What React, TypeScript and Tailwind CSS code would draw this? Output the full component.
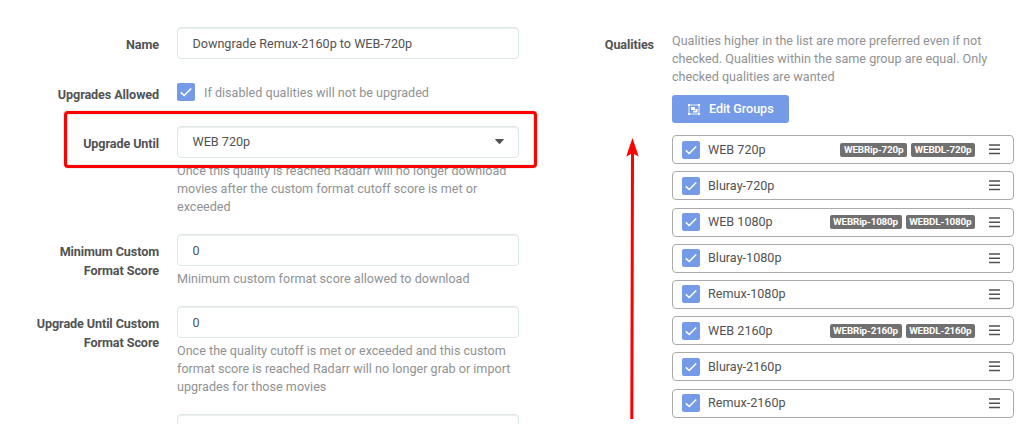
import type { ReactNode } from "react";

type Quality = { name: string; tags?: string[] };

const qualities: Quality[] = [
  { name: "WEB 720p", tags: ["WEBRip-720p", "WEBDL-720p"] },
  { name: "Bluray-720p" },
  { name: "WEB 1080p", tags: ["WEBRip-1080p", "WEBDL-1080p"] },
  { name: "Bluray-1080p" },
  { name: "Remux-1080p" },
  { name: "WEB 2160p", tags: ["WEBRip-2160p", "WEBDL-2160p"] },
  { name: "Bluray-2160p" },
  { name: "Remux-2160p" },
];

function Checkbox() {
  return (
    <span className="flex h-[18px] w-[18px] shrink-0 items-center justify-center rounded-[2px] bg-[#749ae8]">
      <svg viewBox="0 0 12 12" className="h-3 w-3" fill="none" stroke="#fff" strokeWidth="1.6">
        <path d="M.8 6.400L4.200 9.500L11.200 2.500" />
      </svg>
    </span>
  );
}

function Field({ label, children }: { label: string; children: ReactNode }) {
  return (
    <div className="mb-[18px] flex">
      <label className="mr-[18px] w-[139px] shrink-0 pt-2 text-right leading-[19px] font-bold tracking-[-0.09px]">
        {label}
      </label>
      <div className="w-[342px] shrink-0">{children}</div>
    </div>
  );
}

function Input({ value }: { value: string }) {
  return (
    <div className="flex h-[31.5px] items-center rounded-[4px] border border-[#dde6e9] px-[14.5px] pt-[1.5px] shadow-[inset_0_1px_1px_rgba(0,0,0,0.075)]">
      {value}
    </div>
  );
}

function Help({ children }: { children: ReactNode }) {
  return <div className="mt-[4.5px] leading-[18px] text-[#909293]">{children}</div>;
}

function QualityRow({ name, tags }: Quality) {
  return (
    <div className="mb-[7.2px] flex h-[29px] items-center rounded-[4px] border border-[#aaa] pl-[9px]">
      <Checkbox />
      <span className="ml-2 grow">{name}</span>
      {tags && (
        <span className="flex gap-1">
          {tags.map((tag) => (
            <span
              key={tag}
              className="flex h-[14px] items-center rounded-[2px] bg-[#707070] px-[3.6px] text-[9.9px] leading-none font-bold tracking-[-0.19px] text-white"
            >
              {tag}
            </span>
          ))}
        </span>
      )}
      <svg className="mr-[13px] ml-[14px] h-[11px] w-[11px]" viewBox="0 0 11 11" fill="#515253">
        <path d="M0 .2h11v1.500H0zM0 4.500h11V6H0zM0 8.800h11v1.500H0z" />
      </svg>
    </div>
  );
}

export default function App() {
  return (
    <main className="relative flex h-[424px] w-[1022px] overflow-hidden bg-white font-['Roboto',sans-serif] text-[12.6px] leading-[18px] text-[#515253]">
      <section className="ml-5 w-[499px] shrink-0 pt-[27px]">
        <Field label="Name">
          <Input value="Downgrade Remux-2160p to WEB-720p" />
        </Field>
        <Field label="Upgrades Allowed">
          <div className="flex h-[31.5px] items-center gap-[9px] text-[#909293]">
            <Checkbox />
            <span className="pt-px">If disabled qualities will not be upgraded</span>
          </div>
        </Field>
        <Field label="Upgrade Until">
          <div className="flex h-[31.5px] items-center justify-between rounded-[4px] border border-[#dde6e9] px-[14.5px] shadow-[inset_0_1px_1px_rgba(0,0,0,0.075)]">
            WEB 720p
            <svg className="h-[5px] w-[9px]" viewBox="0 0 9 5" fill="#515253">
              <path d="M.6 0h7.800q.8.1.300.800L5 4.700q-.5.400-1 0L.3.800Q-.2.100.6 0z" />
            </svg>
          </div>
          <Help>
            Once this quality is reached Radarr will no longer download movies after the custom format cutoff score is
            met or exceeded
          </Help>
        </Field>
        <Field label="Minimum Custom Format Score">
          <Input value="0" />
          <Help>Minimum custom format score allowed to download</Help>
        </Field>
        <Field label="Upgrade Until Custom Format Score">
          <Input value="0" />
          <Help>
            Once the quality cutoff is met or exceeded and this custom format score is reached Radarr will no longer
            grab or import upgrades for those movies
          </Help>
        </Field>
        <Field label="">
          <Input value="" />
        </Field>
      </section>

      <section className="ml-[78px] flex pt-[27px]">
        <label className="mr-[18px] w-[57px] shrink-0 pt-2 text-right leading-[19px] font-bold tracking-[-0.09px]">
          Qualities
        </label>
        <div className="w-[342px] shrink-0">
          <Help>
            Qualities higher in the list are more preferred even if not checked. Qualities within the same group are
            equal. Only checked qualities are wanted
          </Help>
          <button className="mt-[9.5px] mb-[12.2px] flex h-7 w-[117px] items-center rounded-[3px] bg-[#749ae8] pl-4 text-white">
            <svg className="mr-[9px] h-[11px] w-3" viewBox="0 0 12 11">
              <path d="M1 1h10v9H1z" fill="none" stroke="#fff" strokeOpacity=".85" />
              <path d="M0 0h2v2H0zM10 0h2v2h-2zM0 9h2v2H0zM10 9h2v2h-2z" fill="#fff" />
              <path d="M3 3h4v3H3zM7.500 5H9.500v3.500H5V6.800h2.500z" fill="#fff" />
            </svg>
            <span className="font-medium tracking-[-0.06px]">Edit Groups</span>
          </button>
          {qualities.map((quality) => (
            <QualityRow key={quality.name} {...quality} />
          ))}
        </div>
      </section>

      <div className="absolute top-[111px] left-[64px] h-[56.5px] w-[473px] rounded-[4px] border-3 border-[#fe0000] shadow-[0_0_1px_rgba(0,0,0,0.6),inset_0_0_1px_rgba(0,0,0,0.7)]" />
      <svg className="absolute top-[136px] left-[622px] h-[286px] w-5" viewBox="0 0 20 286" fill="#fe0000">
        <path d="M10.500 2L16.700 20.500L12 18L11.300 283H8.300L9 18L4.200 20.500z" />
      </svg>
    </main>
  );
}
